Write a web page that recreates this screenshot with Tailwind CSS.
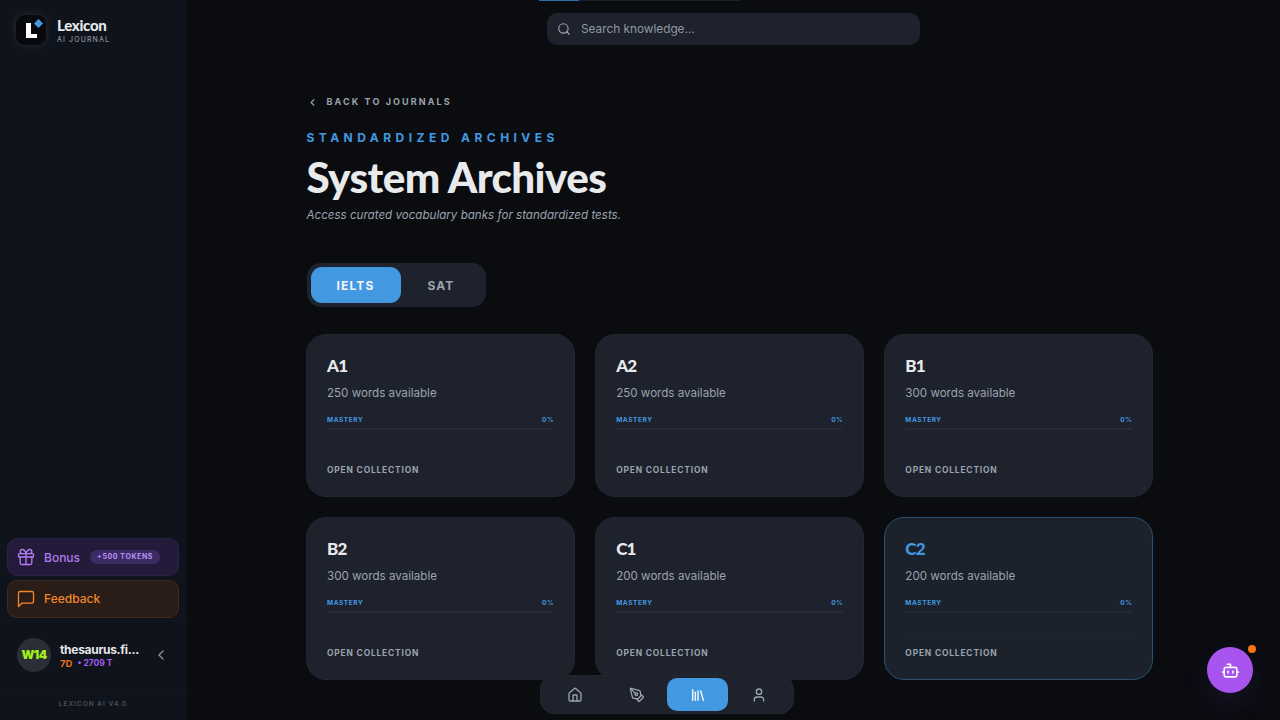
<!DOCTYPE html>
<html><head><meta charset="utf-8"><script src="https://cdn.jsdelivr.net/npm/@tailwindcss/browser@4"></script></head>
<body class="bg-[#0a0c11] font-['Inter','Liberation_Sans',sans-serif]">
<div class="relative w-[1280px] h-[720px] overflow-hidden flex bg-[#0a0c10]">
  <aside class="w-[187px] h-full shrink-0 flex flex-col bg-[#0f131b] border-r border-[#12161d]">
    <div class="h-[60px] flex items-center gap-[10px] pl-[15px]">
      <div class="relative w-[32px] h-[32px] rounded-[10px] bg-[#08090d] border border-[#1c1f26] shadow-[0_0_8px_rgba(255,255,255,0.08)]">
        <div class="absolute left-[10px] top-[8px] w-[4.5px] h-[15px] bg-white"></div>
        <div class="absolute left-[10px] top-[19px] w-[11px] h-[4px] bg-white"></div>
        <svg class="absolute left-[18px] top-[4px]" width="9" height="9" viewBox="0 0 10 10"><path d="M5 0 L10 5 L5 10 L0 5Z" fill="#4299e1"/></svg>
      </div>
      <div class="flex flex-col">
        <span class="text-[15px] leading-[16px] font-black tracking-[-0.3px] text-[#e5e7eb] font-['Lato',sans-serif]">Lexicon</span>
        <span class="mt-[2px] text-[7px] leading-[9px] font-medium tracking-[1.1px] text-[#8b919c]">AI JOURNAL</span>
      </div>
    </div>
    <div class="flex-1"></div>
    <div class="px-[7px] flex flex-col gap-[4px]">
      <div class="h-[38px] rounded-[10px] bg-[#241a3a] border border-[#2c2145] flex items-center pl-[8px] gap-[8px]">
        <svg class="w-[20px] h-[20px] text-[#b27cf0]" viewBox="0 0 24 24" fill="none" stroke="currentColor" stroke-width="1.6" stroke-linecap="round" stroke-linejoin="round"><rect x="3" y="8" width="18" height="4" rx="1"/><path d="M12 8v13"/><path d="M19 12v7a2 2 0 0 1-2 2H7a2 2 0 0 1-2-2v-7"/><path d="M7.5 8a2.5 2.5 0 0 1 0-5A4.8 8 0 0 1 12 8a4.8 8 0 0 1 4.5-5 2.5 2.5 0 0 1 0 5"/></svg>
        <span class="mt-[1px] text-[12px] font-medium text-[#b27cf0]">Bonus</span>
        <span class="ml-[2px] h-[14px] px-[7px] rounded-full bg-[#3c2a63] text-[7px] leading-[14px] font-bold tracking-[0.6px] text-[#b794f4]">+500 TOKENS</span>
      </div>
      <div class="h-[38px] rounded-[10px] bg-[#2a1c16] border border-[#45291a] flex items-center pl-[8px] gap-[8px]">
        <svg class="w-[20px] h-[20px] text-[#f0892b]" viewBox="0 0 24 24" fill="none" stroke="currentColor" stroke-width="1.6" stroke-linecap="round" stroke-linejoin="round"><path d="M21 15a2 2 0 0 1-2 2H7l-4 4V5a2 2 0 0 1 2-2h14a2 2 0 0 1 2 2z"/></svg>
        <span class="text-[12px] font-medium text-[#f0892b]">Feedback</span>
      </div>
    </div>
    <div class="mt-[2px] h-[70px] border-t border-b border-[#141821] flex items-center pl-[17px]">
      <div class="w-[34px] h-[34px] rounded-full bg-[#2a2e36] flex items-center justify-center text-[12px] font-black tracking-[-0.6px] text-[#a3f01a]">W14</div>
      <div class="ml-[9px] flex flex-col w-[87px]">
        <span class="text-[12px] leading-[15px] font-bold tracking-[-0.3px] text-[#e5e7eb] whitespace-nowrap">thesaurus.fi...</span>
        <div class="flex items-center text-[8.5px] leading-[11px] font-bold mt-[1px]"><span class="text-[#e8701a] text-[9.5px]">7D</span><span class="ml-[5px] text-[#9f5cf0]">• 2709 T</span></div>
      </div>
      <svg class="ml-[6px] w-[16px] h-[16px] text-[#8b919c]" viewBox="0 0 24 24" fill="none" stroke="currentColor" stroke-width="2" stroke-linecap="round" stroke-linejoin="round"><path d="m15 18-6-6 6-6"/></svg>
    </div>
    <div class="h-[30px] flex items-center justify-center text-[6.5px] font-semibold tracking-[1px] text-[#4c525e]">LEXICON AI V4.0</div>
  </aside>

  <main class="flex-1 flex flex-col relative">
    <div class="absolute left-[352px] top-0 w-[201px] h-px bg-[#1a1e26]"><div class="w-[40px] h-px bg-[#2b6cb0]"></div></div>
    <div class="mt-[13px] ml-[360px] w-[373px] h-[32px] rounded-[10px] bg-[#1e222c] flex items-center pl-[10px] gap-[10px]">
      <svg class="w-[14px] h-[14px] text-[#9ca3af]" viewBox="0 0 24 24" fill="none" stroke="currentColor" stroke-width="2" stroke-linecap="round" stroke-linejoin="round"><circle cx="11" cy="11" r="8"/><path d="m21 21-4.3-4.3"/></svg>
      <span class="mt-[0.5px] text-[11.8px] leading-[16px] text-[#9097a3]">Search knowledge...</span>
    </div>
    <div class="ml-[119.5px] w-[847px]">
      <div class="mt-[50px] flex items-center gap-[9px] h-[14px]">
        <svg class="w-[11px] h-[11px] text-[#9ca3af]" viewBox="0 0 24 24" fill="none" stroke="currentColor" stroke-width="2.4" stroke-linecap="round" stroke-linejoin="round"><path d="m15 18-6-6 6-6"/></svg>
        <span class="text-[9px] font-bold tracking-[2.1px] text-[#9ca3af]">BACK TO JOURNALS</span>
      </div>
      <div class="mt-[22px] text-[12px] leading-[14px] font-bold tracking-[4.45px] text-[#4299e1]">STANDARDIZED ARCHIVES</div>
      <h1 class="mt-[8px] text-[42.2px] leading-[48px] font-black tracking-[-0.6px] text-[#e9eaec] font-['Lato',sans-serif]">System Archives</h1>
      <p class="mt-[5.5px] text-[11.6px] leading-[16px] italic text-[#9ca3af]">Access curated vocabulary banks for standardized tests.</p>
      <div class="mt-[40.5px] w-[179px] h-[44px] rounded-[14px] bg-[#1e222c] p-[4px] flex">
        <div class="w-[90px] pt-[1px] rounded-[11px] bg-[#4299e1] flex items-center justify-center text-[12px] font-bold tracking-[1.2px] text-[#f3f4f6]">IELTS</div>
        <div class="flex-1 pt-[1px] flex items-center justify-center text-[12px] font-bold tracking-[1.2px] text-[#9ca3af]">SAT</div>
      </div>
      <div class="-ml-[0.5px] mt-[27px] grid grid-cols-3 gap-[20px]">
        <div class="h-[163px] rounded-[20px] bg-[#1e222c] border border-[#22262f] px-[20px] pt-[21px]">
          <div class="text-[17px] leading-[20px] font-black tracking-[-0.8px] text-[#e9eaec] font-['Lato',sans-serif]">A1</div>
          <div class="mt-[9px] text-[11.6px] leading-[16px] text-[#9ca3af]">250 words available</div>
          <div class="mt-[15px] flex justify-between text-[6.5px] leading-[8px] font-bold tracking-[0.6px] text-[#4299e1]"><span>MASTERY</span><span>0%</span></div>
          <div class="mt-[4px] h-[2px] rounded-full bg-[#272b35]"></div>
          <div class="mt-[20px] h-px bg-[#20242e]"></div>
          <div class="mt-[13.5px] text-[8.4px] leading-[10px] font-bold tracking-[0.85px] text-[#9ca3af]">OPEN COLLECTION</div>
        </div>
        <div class="h-[163px] rounded-[20px] bg-[#1e222c] border border-[#22262f] px-[20px] pt-[21px]">
          <div class="text-[17px] leading-[20px] font-black tracking-[-0.8px] text-[#e9eaec] font-['Lato',sans-serif]">A2</div>
          <div class="mt-[9px] text-[11.6px] leading-[16px] text-[#9ca3af]">250 words available</div>
          <div class="mt-[15px] flex justify-between text-[6.5px] leading-[8px] font-bold tracking-[0.6px] text-[#4299e1]"><span>MASTERY</span><span>0%</span></div>
          <div class="mt-[4px] h-[2px] rounded-full bg-[#272b35]"></div>
          <div class="mt-[20px] h-px bg-[#20242e]"></div>
          <div class="mt-[13.5px] text-[8.4px] leading-[10px] font-bold tracking-[0.85px] text-[#9ca3af]">OPEN COLLECTION</div>
        </div>
        <div class="h-[163px] rounded-[20px] bg-[#1e222c] border border-[#22262f] px-[20px] pt-[21px]">
          <div class="text-[17px] leading-[20px] font-black tracking-[-0.8px] text-[#e9eaec] font-['Lato',sans-serif]">B1</div>
          <div class="mt-[9px] text-[11.6px] leading-[16px] text-[#9ca3af]">300 words available</div>
          <div class="mt-[15px] flex justify-between text-[6.5px] leading-[8px] font-bold tracking-[0.6px] text-[#4299e1]"><span>MASTERY</span><span>0%</span></div>
          <div class="mt-[4px] h-[2px] rounded-full bg-[#272b35]"></div>
          <div class="mt-[20px] h-px bg-[#20242e]"></div>
          <div class="mt-[13.5px] text-[8.4px] leading-[10px] font-bold tracking-[0.85px] text-[#9ca3af]">OPEN COLLECTION</div>
        </div>
        <div class="h-[163px] rounded-[20px] bg-[#1e222c] border border-[#22262f] px-[20px] pt-[21px]">
          <div class="text-[17px] leading-[20px] font-black tracking-[-0.8px] text-[#e9eaec] font-['Lato',sans-serif]">B2</div>
          <div class="mt-[9px] text-[11.6px] leading-[16px] text-[#9ca3af]">300 words available</div>
          <div class="mt-[15px] flex justify-between text-[6.5px] leading-[8px] font-bold tracking-[0.6px] text-[#4299e1]"><span>MASTERY</span><span>0%</span></div>
          <div class="mt-[4px] h-[2px] rounded-full bg-[#272b35]"></div>
          <div class="mt-[20px] h-px bg-[#20242e]"></div>
          <div class="mt-[13.5px] text-[8.4px] leading-[10px] font-bold tracking-[0.85px] text-[#9ca3af]">OPEN COLLECTION</div>
        </div>
        <div class="h-[163px] rounded-[20px] bg-[#1e222c] border border-[#22262f] px-[20px] pt-[21px]">
          <div class="text-[17px] leading-[20px] font-black tracking-[-0.8px] text-[#e9eaec] font-['Lato',sans-serif]">C1</div>
          <div class="mt-[9px] text-[11.6px] leading-[16px] text-[#9ca3af]">200 words available</div>
          <div class="mt-[15px] flex justify-between text-[6.5px] leading-[8px] font-bold tracking-[0.6px] text-[#4299e1]"><span>MASTERY</span><span>0%</span></div>
          <div class="mt-[4px] h-[2px] rounded-full bg-[#272b35]"></div>
          <div class="mt-[20px] h-px bg-[#20242e]"></div>
          <div class="mt-[13.5px] text-[8.4px] leading-[10px] font-bold tracking-[0.85px] text-[#9ca3af]">OPEN COLLECTION</div>
        </div>
        <div class="h-[163px] rounded-[20px] bg-[#1b222b] border border-[#28516f] px-[20px] pt-[21px]">
          <div class="text-[17px] leading-[20px] font-black tracking-[-0.8px] text-[#4299e1] font-['Lato',sans-serif]">C2</div>
          <div class="mt-[9px] text-[11.6px] leading-[16px] text-[#9ca3af]">200 words available</div>
          <div class="mt-[15px] flex justify-between text-[6.5px] leading-[8px] font-bold tracking-[0.6px] text-[#4299e1]"><span>MASTERY</span><span>0%</span></div>
          <div class="mt-[4px] h-[2px] rounded-full bg-[#232a33]"></div>
          <div class="mt-[20px] h-px bg-[#1d242d]"></div>
          <div class="mt-[13.5px] text-[8.4px] leading-[10px] font-bold tracking-[0.85px] text-[#9ca3af]">OPEN COLLECTION</div>
        </div>
      </div>
    </div>
  </main>

  <nav class="absolute left-[540px] top-[675px] w-[254px] h-[39px] rounded-[14px] bg-[#1e222c] border border-[#22262f] flex items-center pl-[2px] pr-[3px]">
    <div class="w-[63px] flex justify-center"><svg class="w-[16px] h-[16px] text-[#9ca3af]" viewBox="0 0 24 24" fill="none" stroke="currentColor" stroke-width="2" stroke-linecap="round" stroke-linejoin="round"><path d="M15 21v-8a1 1 0 0 0-1-1h-4a1 1 0 0 0-1 1v8"/><path d="M3 10a2 2 0 0 1 .7-1.5l7-6a2 2 0 0 1 2.6 0l7 6A2 2 0 0 1 21 10v9a2 2 0 0 1-2 2H5a2 2 0 0 1-2-2z"/></svg></div>
    <div class="w-[61px] flex justify-center"><svg class="w-[16px] h-[16px] text-[#9ca3af]" viewBox="0 0 24 24" fill="none" stroke="currentColor" stroke-width="2" stroke-linecap="round" stroke-linejoin="round"><path d="M15.7 21.3a1 1 0 0 1-1.4 0l-1.6-1.6a1 1 0 0 1 0-1.4l5.6-5.6a1 1 0 0 1 1.4 0l1.6 1.6a1 1 0 0 1 0 1.4z"/><path d="m18 13-1.4-6.9a1 1 0 0 0-.7-.8L3.2 2 2 3.2l3.3 12.7a1 1 0 0 0 .8.7L13 18"/><path d="m2.3 2.3 7.3 7.3"/><circle cx="11" cy="11" r="2"/></svg></div>
    <div class="w-[61px] h-[33px] rounded-[10px] bg-[#4299e1] flex items-center justify-center"><svg class="w-[16px] h-[16px] text-[#f1f7fd]" viewBox="0 0 24 24" fill="none" stroke="currentColor" stroke-width="2.2" stroke-linecap="round" stroke-linejoin="round"><path d="m16 6 4 14"/><path d="M12 6v14"/><path d="M8 8v12"/><path d="M4 4v16"/></svg></div>
    <div class="w-[61px] flex justify-center"><svg class="w-[16px] h-[16px] text-[#9ca3af]" viewBox="0 0 24 24" fill="none" stroke="currentColor" stroke-width="2" stroke-linecap="round" stroke-linejoin="round"><path d="M19 21v-2a4 4 0 0 0-4-4H9a4 4 0 0 0-4 4v2"/><circle cx="12" cy="7" r="4"/></svg></div>
  </nav>

  <div class="absolute left-[1207px] top-[647px] w-[46px] h-[46px] rounded-full bg-[#a855f0] flex items-center justify-center shadow-[0_10px_30px_rgba(120,70,220,0.12)]">
    <svg class="w-[19px] h-[19px] text-white" viewBox="0 0 24 24" fill="none" stroke="currentColor" stroke-width="2" stroke-linecap="round" stroke-linejoin="round"><path d="M12 8V4H8"/><rect x="4" y="8" width="16" height="12" rx="2"/><path d="M2 14h2"/><path d="M20 14h2"/><path d="M15 13v2"/><path d="M9 13v2"/></svg>
    <div class="absolute left-[41px] -top-[2px] w-[8px] h-[8px] rounded-full bg-[#f97316]"></div>
  </div>
</div>
</body></html>
